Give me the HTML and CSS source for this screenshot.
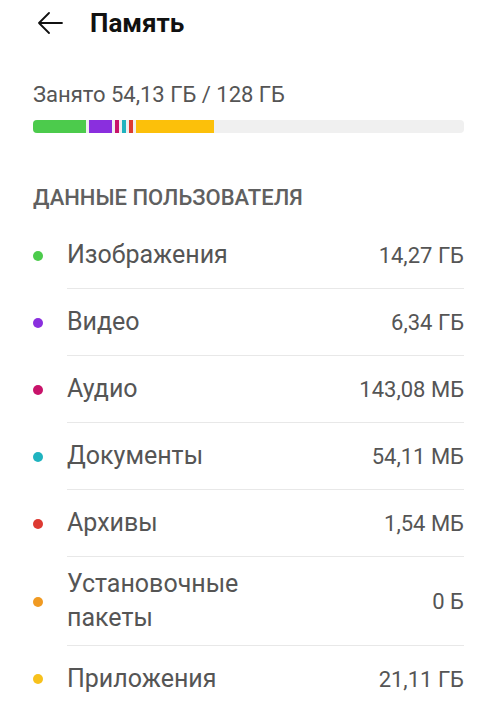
FILE: index.html
```html
<!DOCTYPE html>
<html lang="ru">
<head>
    <meta charset="UTF-8">
    <meta name="viewport" content="width=device-width, initial-scale=1.0">
    <title>Память</title>
    <link rel="stylesheet" href="styles.css">
</head>
<body>
    <div class="header">
        <svg class="back_icon" width="26" height="22" viewBox="0 0 26 22">
            <path d="M25 11H2M12 1L2 11l10 10" fill="none" stroke="#111" stroke-width="1.8" stroke-linecap="round" stroke-linejoin="round"/>
        </svg>
        <h1 class="title">Память</h1>
    </div>

    <div class="summary">
        <p class="summary_text">Занято 54,13 ГБ / 128 ГБ</p>
        <div class="bar">
            <div class="seg" style="width:53px; background:#4ccb4c"></div>
            <div class="seg" style="width:23px; background:#8a2fde"></div>
            <div class="seg" style="width:4px; background:#c8136a"></div>
            <div class="seg" style="width:4px; background:#1fb3bf"></div>
            <div class="seg" style="width:4px; background:#dd3a32"></div>
            <div class="seg" style="width:78px; background:#fcc00a"></div>
        </div>
    </div>

    <p class="section_title">ДАННЫЕ ПОЛЬЗОВАТЕЛЯ</p>

    <div class="list">
        <div class="item">
            <span class="dot" style="background:#4ccb4c"></span>
            <div class="item_body"><span class="label">Изображения</span><span class="value">14,27 ГБ</span></div>
        </div>
        <div class="item">
            <span class="dot" style="background:#8a2fde"></span>
            <div class="item_body"><span class="label">Видео</span><span class="value">6,34 ГБ</span></div>
        </div>
        <div class="item">
            <span class="dot" style="background:#c8136a"></span>
            <div class="item_body"><span class="label">Аудио</span><span class="value">143,08 МБ</span></div>
        </div>
        <div class="item">
            <span class="dot" style="background:#1fb3bf"></span>
            <div class="item_body"><span class="label">Документы</span><span class="value">54,11 МБ</span></div>
        </div>
        <div class="item">
            <span class="dot" style="background:#dd3a32"></span>
            <div class="item_body"><span class="label">Архивы</span><span class="value">1,54 МБ</span></div>
        </div>
        <div class="item">
            <span class="dot" style="background:#f09a22"></span>
            <div class="item_body tall"><span class="label">Установочные<br>пакеты</span><span class="value">0 Б</span></div>
        </div>
        <div class="item">
            <span class="dot" style="background:#f7c11c"></span>
            <div class="item_body last"><span class="label">Приложения</span><span class="value">21,11 ГБ</span></div>
        </div>
    </div>
</body>
</html>
```

FILE: styles.css
```css
body {
    margin: 0;
    padding: 0 34px 0 33px;
    background: #fff;
    font-family: Roboto, "Noto Sans", sans-serif;
    color: #555;
}
.header {
    display: flex;
    align-items: center;
    height: 46px;
}
.back_icon {
    margin-left: 4px;
}
.title {
    margin: 0 0 0 27px;
    font-size: 26px;
    font-weight: bold;
    color: #111;
}
.summary {
    padding-top: 36px;
}
.summary_text {
    margin: 0;
    font-size: 22px;
    line-height: 26px;
}
.bar {
    display: flex;
    gap: 3px;
    height: 13px;
    margin-top: 12px;
    background: #f0f0f0;
    border-radius: 4px;
    overflow: hidden;
}
.seg {
    height: 100%;
}
.section_title {
    margin: 52px 0 0;
    font-size: 22px;
    font-weight: 500;
    line-height: 26px;
    color: #606060;
}
.list {
    margin-top: 11px;
}
.item {
    display: flex;
    align-items: center;
}
.dot {
    width: 10px;
    height: 10px;
    border-radius: 50%;
    margin-right: 24px;
    flex-shrink: 0;
}
.item_body {
    flex: 1;
    display: flex;
    justify-content: space-between;
    align-items: center;
    min-height: 66px;
    border-bottom: 1px solid #e8e8e8;
}
.item_body.tall {
    min-height: 88px;
}
.item_body.last {
    border-bottom: none;
}
.label {
    font-size: 25px;
    line-height: 34px;
}
.value {
    font-size: 22px;
}
```
